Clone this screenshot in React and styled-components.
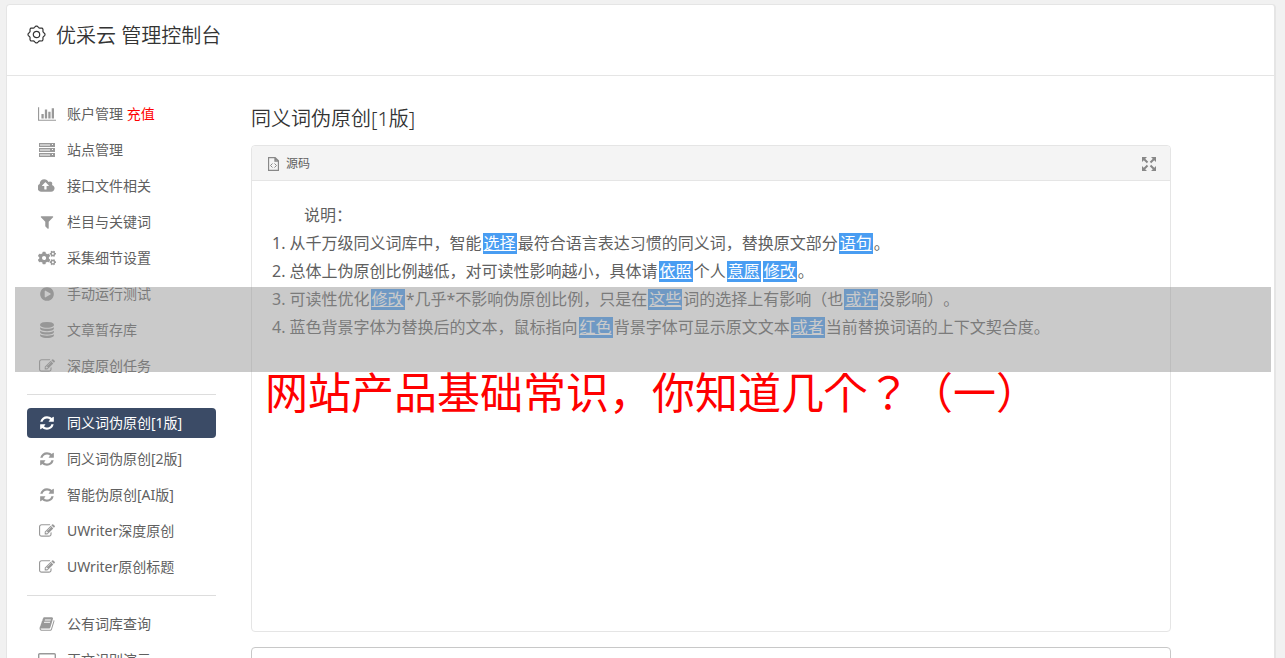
import React from "react";
import styled, { createGlobalStyle } from "styled-components";
import { FaCogs } from "react-icons/fa";

const GlobalStyle = createGlobalStyle`
    * {
        box-sizing: border-box;
    }
    html {
        scrollbar-width: none;
    }
    body {
        margin: 0;
        background-color: #f1f1f1;
        color: #606060;
        font-family: "Noto Sans", "Noto Sans CJK SC", sans-serif;
        font-size: 14px;
        text-spacing-trim: space-all;
    }
    button {
        padding: 0;
        border: 0;
        background: none;
        color: inherit;
        font: inherit;
        cursor: pointer;
    }
`;

// wavy outline of the header gear
const gearPath =
    Array.from({ length: 96 }, (_, i) => {
        const a = (i / 96) * Math.PI * 2;
        const r = 7.8 + 0.7 * Math.cos(a * 8);
        const x = (9.5 + r * Math.cos(a)).toFixed(2);
        const y = (9.5 + r * Math.sin(a)).toFixed(2);
        return `${i ? "L" : "M"}${x} ${y}`;
    }).join("") + "Z";

const paths = {
    chart: "M640 896v512h-256v-512h256zm384-512v1024h-256v-1024h256zm1024 1152v128h-2048v-1536h128v1408h1920zm-640-896v768h-256v-768h256zm384-384v1152h-256v-1152h256z",
    cloud: "M1216 864q0-14-9-23l-352-352q-9-9-23-9t-23 9l-351 351q-10 12-10 24 0 14 9 23t23 9h224v352q0 13 9.5 22.5t22.5 9.5h192q13 0 22.5-9.5t9.5-22.5v-352h224q13 0 22.5-9.5t9.5-22.5zm640 288q0 159-112.5 271.5t-271.5 112.5h-1088q-185 0-316.5-131.5t-131.5-316.5q0-130 70-240t188-165q-2-30-2-43 0-212 150-362t362-150q156 0 285.5 87t188.5 231q71-62 166-62 106 0 181 75t75 181q0 76-41 138 130 31 213.5 135.5t83.5 238.5z",
    filter: "M1595 295q17 41-14 70l-493 493v742q0 42-39 59-13 5-25 5-27 0-45-19l-256-256q-19-19-19-45v-486l-493-493q-31-29-14-70 17-39 59-39h1280q42 0 59 39z",
    play: "M896 128q209 0 385.5 103t279.5 279.5 103 385.5-103 385.5-279.5 279.5-385.5 103-385.5-103-279.5-279.5-103-385.5 103-385.5 279.5-279.5 385.5-103zm384 823q32-18 32-55t-32-55l-544-320q-31-19-64-1-32 19-32 56v640q0 37 32 56 16 8 32 8 17 0 32-9z",
    database:
        "M896 768q237 0 443-43t325-127v170q0 69-103 128t-280 93.5-385 34.5-385-34.5-280-93.5-103-128v-170q119 84 325 127t443 43zm0 768q237 0 443-43t325-127v170q0 69-103 128t-280 93.5-385 34.5-385-34.5-280-93.5-103-128v-170q119 84 325 127t443 43zm0-384q237 0 443-43t325-127v170q0 69-103 128t-280 93.5-385 34.5-385-34.5-280-93.5-103-128v-170q119 84 325 127t443 43zm0-1152q208 0 385 34.5t280 93.5 103 128v128q0 69-103 128t-280 93.5-385 34.5-385-34.5-280-93.5-103-128v-128q0-69 103-128t280-93.5 385-34.5z",
    edit: "M888 1184l116-116-152-152-116 116v56h96v96h56zm440-720q-16-16-33 1l-350 350q-17 17-1 33t33-1l350-350q17-17 1-33zm80 594v190q0 119-84.5 203.5t-203.5 84.5h-832q-119 0-203.5-84.5t-84.5-203.5v-832q0-119 84.5-203.5t203.5-84.5h832q63 0 117 25 15 7 18 23 3 17-9 29l-49 49q-14 14-32 8-23-6-45-6h-832q-66 0-113 47t-47 113v832q0 66 47 113t113 47h832q66 0 113-47t47-113v-126q0-13 9-22l64-64q15-15 35-7t20 29zm-96-738l288 288-672 672h-288v-288zm444 132l-92 92-288-288 92-92q28-28 68-28t68 28l152 152q28 28 28 68t-28 68z",
    refresh:
        "M1639 1056q0 5-1 7-64 268-268 434.5t-478 166.5q-146 0-282.5-55t-243.5-157l-129 129q-19 19-45 19t-45-19-19-45v-448q0-26 19-45t45-19h448q26 0 45 19t19 45-19 45l-137 137q71 66 161 102t187 36q134 0 250-65t186-179q11-17 53-117 8-23 30-23h192q13 0 22.5 9.5t9.5 22.5zm25-800v448q0 26-19 45t-45 19h-448q-26 0-45-19t-19-45 19-45l138-138q-148-137-349-137-134 0-250 65t-186 179q-11 17-53 117-8 23-30 23h-199q-13 0-22.5-9.5t-9.5-22.5v-7q65-268 270-434.5t480-166.5q146 0 284 55.5t245 156.5l130-129q19-19 45-19t45 19 19 45z",
    book: "M1703 478q40 57 18 129l-275 906q-19 64-76.5 107.5t-122.5 43.5h-923q-77 0-148.5-53.5t-99.5-131.5q-24-67-2-127 0-4 3-27t4-37q1-8-3-21.5t-3-19.5q2-11 8-21t16.5-23.5 16.5-23.5q23-38 45-91.5t30-91.5q3-10 .5-30t-.5-28q3-11 17-28t17-23q21-36 42-92t25-90q1-9-2.5-32t.5-28q4-13 22-30.5t22-22.5q19-26 42.5-84.5t27.5-96.5q1-8-3-25.5t-2-26.5q2-8 9-18t18-23 17-21q8-12 16.5-30.5t15-35 16-36 19.5-32 26.5-23.5 36-11.5 47.5 5.5l-1 3q38-9 51-9h761q74 0 114 56t18 130l-274 906q-36 119-71.5 153.5t-128.5 34.5h-869q-27 0-38 15-11 16-1 43 24 70 144 70h923q29 0 56-15.5t35-41.5l300-987q7-22 5-57 38 15 59 43zm-1064 2q-4 13 2 22.5t20 9.5h608q13 0 25.5-9.5t16.5-22.5l21-64q4-13-2-22.5t-20-9.5h-608q-13 0-25.5 9.5t-16.5 22.5zm-83 256q-4 13 2 22.5t20 9.5h608q13 0 25.5-9.5t16.5-22.5l21-64q4-13-2-22.5t-20-9.5h-608q-13 0-25.5 9.5t-16.5 22.5z",
};

const viewWidths = { chart: 2048, cloud: 1920 };

const MenuIcon = ({ name }) => {
    if (name === "cogs") return <FaCogs size={18} />;
    if (name === "server") {
        return (
            <svg width="16" height="14" viewBox="0 0 16 14">
                {[0, 5, 10].map((y) => (
                    <g key={y}>
                        <rect y={y} width="16" height="4" fill="#999" />
                        <rect x="1" y={y + 1} width="10" height="2" fill="#ccc" />
                        <rect x="13" y={y + 1} width="1" height="1" fill="#fff" />
                    </g>
                ))}
            </svg>
        );
    }
    if (name === "laptop") {
        return (
            <svg width="20" height="14" viewBox="0 0 20 14" fill="none" stroke="#999" strokeWidth="1.4">
                <rect x="1.7" y="0.7" width="16.6" height="10" rx="1" />
                <path d="M0 13h20" />
            </svg>
        );
    }
    const w = viewWidths[name] || 1792;
    return (
        <svg width={(w / 1792) * 16} height="16" viewBox={`0 0 ${w} 1792`} fill="currentColor">
            <path d={paths[name]} />
        </svg>
    );
};

const groups = [
    [
        { icon: "chart", text: "账户管理", extra: "充值" },
        { icon: "server", text: "站点管理" },
        { icon: "cloud", text: "接口文件相关" },
        { icon: "filter", text: "栏目与关键词" },
        { icon: "cogs", text: "采集细节设置" },
        { icon: "play", text: "手动运行测试" },
        { icon: "database", text: "文章暂存库" },
        { icon: "edit", text: "深度原创任务" },
    ],
    [
        { icon: "refresh", text: "同义词伪原创[1版]", active: true },
        { icon: "refresh", text: "同义词伪原创[2版]" },
        { icon: "refresh", text: "智能伪原创[AI版]" },
        { icon: "edit", text: "UWriter深度原创" },
        { icon: "edit", text: "UWriter原创标题" },
    ],
    [
        { icon: "book", text: "公有词库查询" },
        { icon: "laptop", text: "正文识别演示" },
    ],
];

const Card = styled.div`
    margin: 4px 9px 0 6px;
    background-color: #fff;
    border: 1px solid #e5e5e5;
    border-right-width: 2px;
    border-radius: 4px;
`;

const Header = styled.header`
    display: flex;
    align-items: flex-start;
    gap: 10px;
    height: 71px;
    padding: 16px 20px;
    border-bottom: 1px solid #e5e5e5;
    color: #333;
    svg {
        margin-top: 4px;
    }
    h1 {
        margin: 0;
        font-size: 20px;
        line-height: 30px;
        font-weight: 350;
    }
`;

const Columns = styled.div`
    display: flex;
    gap: 35px;
    padding: 23px 103px 20px 20px;
`;

const Sidebar = styled.nav`
    flex: none;
    width: 189px;
`;

const Group = styled.div`
    display: flex;
    flex-direction: column;
    gap: 6px;
    & + & {
        margin-top: 13px;
        padding-top: 13px;
        border-top: 1px solid #ddd;
    }
`;

const MenuLink = styled.a`
    display: flex;
    align-items: center;
    gap: 10px;
    height: 30px;
    padding: 0 10px;
    border-radius: 4px;
    line-height: 30px;
    text-decoration: none;
    white-space: nowrap;
    color: ${(props) => (props.$active ? "#fff" : "#606060")};
    background-color: ${(props) => (props.$active ? "#3b4b66" : "transparent")};
    .icon {
        display: flex;
        justify-content: center;
        width: 20px;
        color: ${(props) => (props.$active ? "#fff" : "#999")};
    }
    em {
        font-style: normal;
        color: #f00;
    }
`;

const Main = styled.main`
    flex: 1;
    min-width: 0;
    h2 {
        margin: 4px 0 10px;
        font-size: 20px;
        line-height: 32px;
        font-weight: 350;
        color: #333;
    }
`;

const Panel = styled.section`
    border: 1px solid #e5e5e5;
    border-radius: 4px;
`;

const PanelBar = styled.div`
    display: flex;
    align-items: center;
    justify-content: space-between;
    height: 35px;
    padding: 2px 14px 0 16px;
    background-color: #f4f4f4;
    border-bottom: 1px solid #e5e5e5;
    border-radius: 4px 4px 0 0;
`;

const BarButton = styled.button`
    display: flex;
    align-items: center;
    gap: 7px;
    font-size: 12px;
    line-height: 20px;
`;

const Article = styled.div`
    min-height: 450px;
    padding: 20px;
    font-size: 16px;
    line-height: 28px;
    p {
        margin: 0;
    }
    .lead {
        text-indent: 2em;
    }
`;

const Word = styled.span`
    margin: 0 1px;
    padding: 0 1px;
    display: inline-block;
    line-height: 21px;
    color: #fff;
    background-color: #499df2;
    text-decoration: underline;
`;

const Result = styled.textarea`
    display: block;
    width: 100%;
    height: 120px;
    margin-top: 15px;
    border: 1px solid #c8c8c8;
    border-radius: 4px;
    background-color: #fff;
    resize: none;
`;

// translucent banner laid over the page
const Banner = styled.div`
    position: absolute;
    top: 287px;
    left: 15px;
    right: 14px;
    pointer-events: none;
    &::before {
        content: "";
        display: block;
        height: 85px;
        background-color: rgba(149, 149, 149, 0.5);
    }
    p {
        margin: -14px 0 0;
        padding-left: 250px;
        font-family: "Noto Sans CJK JP", sans-serif;
        font-size: 43px;
        line-height: 64px;
        color: #f00;
        white-space: nowrap;
    }
`;

const App = () => {
    return (
        <>
            <GlobalStyle />
            <Card>
                <Header>
                    <svg width="19" height="19" viewBox="0 0 19 19" fill="none" stroke="#333" strokeWidth="1.2">
                        <path d={gearPath} />
                        <circle cx="9.5" cy="9.5" r="3.2" />
                    </svg>
                    <h1>优采云 管理控制台</h1>
                </Header>
                <Columns>
                    <Sidebar>
                        {groups.map((items, i) => (
                            <Group key={i}>
                                {items.map((item) => (
                                    <MenuLink key={item.text} href="#" $active={item.active}>
                                        <span className="icon">
                                            <MenuIcon name={item.icon} />
                                        </span>
                                        <span>
                                            {item.text}
                                            {item.extra && <em> {item.extra}</em>}
                                        </span>
                                    </MenuLink>
                                ))}
                            </Group>
                        ))}
                    </Sidebar>
                    <Main>
                        <h2>同义词伪原创[1版]</h2>
                        <Panel>
                            <PanelBar>
                                <BarButton type="button">
                                    <svg width="11" height="14" viewBox="0 0 11 14" fill="none" stroke="#888">
                                        <path strokeWidth="1.3" d="M.5.5h6.500l3.500 3.500v9.500h-10zM7 .5V4h3.500" />
                                        <path d="M4.500 6.500l-2 2 2 2M6.500 6.500l2 2-2 2" />
                                    </svg>
                                    源码
                                </BarButton>
                                <BarButton type="button" aria-label="全屏">
                                    <svg width="14" height="14" viewBox="0 0 14 14" fill="#888" stroke="#888" strokeWidth="2">
                                        <path d="M1.500 1.500l4 4M12.500 1.500l-4 4M1.500 12.500l4-4M12.500 12.500l-4-4" />
                                        <path
                                            stroke="none"
                                            d="M0 0h5L0 5zM14 0v5L9 0zM0 14V9l5 5zM14 14H9l5-5z"
                                        />
                                    </svg>
                                </BarButton>
                            </PanelBar>
                            <Article>
                                <p className="lead">说明：</p>
                                <p>
                                    1. 从千万级同义词库中，智能<Word>选择</Word>
                                    最符合语言表达习惯的同义词，替换原文部分<Word>语句</Word>。
                                </p>
                                <p>
                                    2. 总体上伪原创比例越低，对可读性影响越小，具体请<Word>依照</Word>
                                    个人<Word>意愿</Word>
                                    <Word>修改</Word>。
                                </p>
                                <p>
                                    3. 可读性优化<Word>修改</Word>
                                    *几乎*不影响伪原创比例，只是在<Word>这些</Word>
                                    词的选择上有影响（也<Word>或许</Word>没影响）。
                                </p>
                                <p>
                                    4. 蓝色背景字体为替换后的文本，鼠标指向<Word>红色</Word>
                                    背景字体可显示原文文本<Word>或者</Word>
                                    当前替换词语的上下文契合度。
                                </p>
                            </Article>
                        </Panel>
                        <Result aria-label="结果" />
                    </Main>
                </Columns>
            </Card>
            <Banner>
                <p>网站产品基础常识，你知道几个？（一）</p>
            </Banner>
        </>
    );
};

export default App;
